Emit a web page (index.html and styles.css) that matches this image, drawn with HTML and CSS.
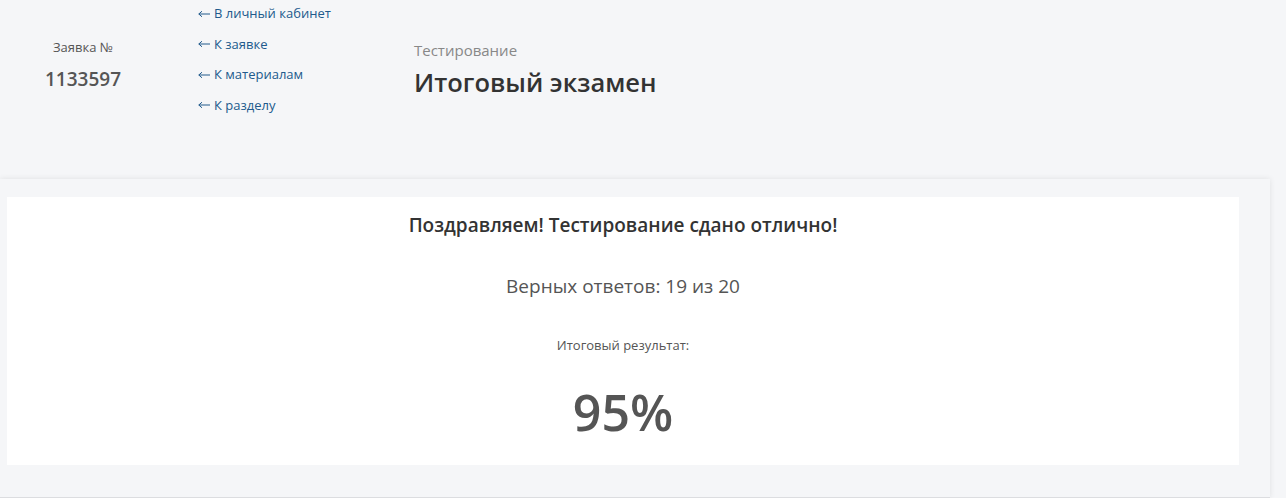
FILE: index.html
```html
<!DOCTYPE html>
<html lang="ru">
<head>
<meta charset="utf-8">
<meta name="viewport" content="width=device-width, initial-scale=1.0">
<title>Итоговый экзамен</title>
<link rel="stylesheet" href="styles.css">
</head>
<body>
<!-- Шапка: номер заявки, навигация, заголовок -->
<header class="top">
  <div class="order">
    <div class="order-label">Заявка №</div>
    <div class="order-num">1133597</div>
  </div>
  <nav class="backlinks">
    <a href="#"><svg class="arrow" width="12" height="8" viewBox="0 0 12 8"><path d="M0.8 4H12M4 1.2L0.8 4L4 6.8" fill="none" stroke="currentColor" stroke-width="1"/></svg>В личный кабинет</a>
    <a href="#"><svg class="arrow" width="12" height="8" viewBox="0 0 12 8"><path d="M0.8 4H12M4 1.2L0.8 4L4 6.8" fill="none" stroke="currentColor" stroke-width="1"/></svg>К заявке</a>
    <a href="#"><svg class="arrow" width="12" height="8" viewBox="0 0 12 8"><path d="M0.8 4H12M4 1.2L0.8 4L4 6.8" fill="none" stroke="currentColor" stroke-width="1"/></svg>К материалам</a>
    <a href="#"><svg class="arrow" width="12" height="8" viewBox="0 0 12 8"><path d="M0.8 4H12M4 1.2L0.8 4L4 6.8" fill="none" stroke="currentColor" stroke-width="1"/></svg>К разделу</a>
  </nav>
  <div class="heading">
    <div class="heading-sub">Тестирование</div>
    <h1 class="heading-title">Итоговый экзамен</h1>
  </div>
</header>

<!-- Результат теста -->
<section class="panel">
  <div class="result-card">
    <h2 class="result-title">Поздравляем! Тестирование сдано отлично!</h2>
    <p class="result-answers">Верных ответов: 19 из 20</p>
    <p class="result-label">Итоговый результат:</p>
    <div class="result-score">95%</div>
  </div>
</section>
</body>
</html>
```

FILE: styles.css
```css
body {
  margin: 0;
  background-color: #f5f6f8;
  font-family: "Open Sans", "Liberation Sans", sans-serif;
  color: #333;
}

/* Шапка страницы */
.top {
  display: flex;
  height: 179px;
}
.order {
  width: 166px;
  text-align: center;
  padding-top: 38px;
}
.order-label {
  font-size: 13px;
  line-height: 18px;
  color: #555;
}
.order-num {
  margin-top: 10px;
  font-size: 19px;
  line-height: 26px;
  font-weight: 600;
  color: #555;
}
.backlinks {
  display: flex;
  flex-direction: column;
  gap: 4.5px;
  width: 216px;
  margin-left: 32px;
}
.backlinks a {
  display: flex;
  align-items: center;
  height: 26px;
  font-size: 13px;
  line-height: 26px;
  color: #215a8c;
  text-decoration: none;
}
.arrow {
  margin-right: 4px;
  margin-top: 1px;
}
.heading {
  padding-top: 40px;
}
.heading-sub {
  font-size: 15px;
  line-height: 20px;
  color: #888;
}
.heading-title {
  margin: 6px 0 0;
  font-size: 25.5px;
  line-height: 32px;
  font-weight: 600;
  color: #333;
}

/* Панель с результатом */
.panel {
  width: 1232px;
  padding: 18px 31px 32px 7px;
  background-color: #f5f6f8;
  box-shadow: 0 0 6px rgba(0, 0, 0, 0.09);
  border-bottom: 1px solid #dcdde0;
}
.result-card {
  background: #fff;
  text-align: center;
  padding: 15px 0 23px;
}
.result-title {
  margin: 0;
  font-size: 19px;
  line-height: 26px;
  font-weight: 600;
  color: #333;
}
.result-answers {
  margin: 34px 0 0;
  font-size: 19px;
  line-height: 28px;
  color: #555;
}
.result-label {
  margin: 36px 0 0;
  font-size: 13px;
  line-height: 18px;
  color: #555;
}
.result-score {
  margin-top: 28px;
  font-size: 50px;
  line-height: 60px;
  font-weight: 600;
  color: #555;
}
```
